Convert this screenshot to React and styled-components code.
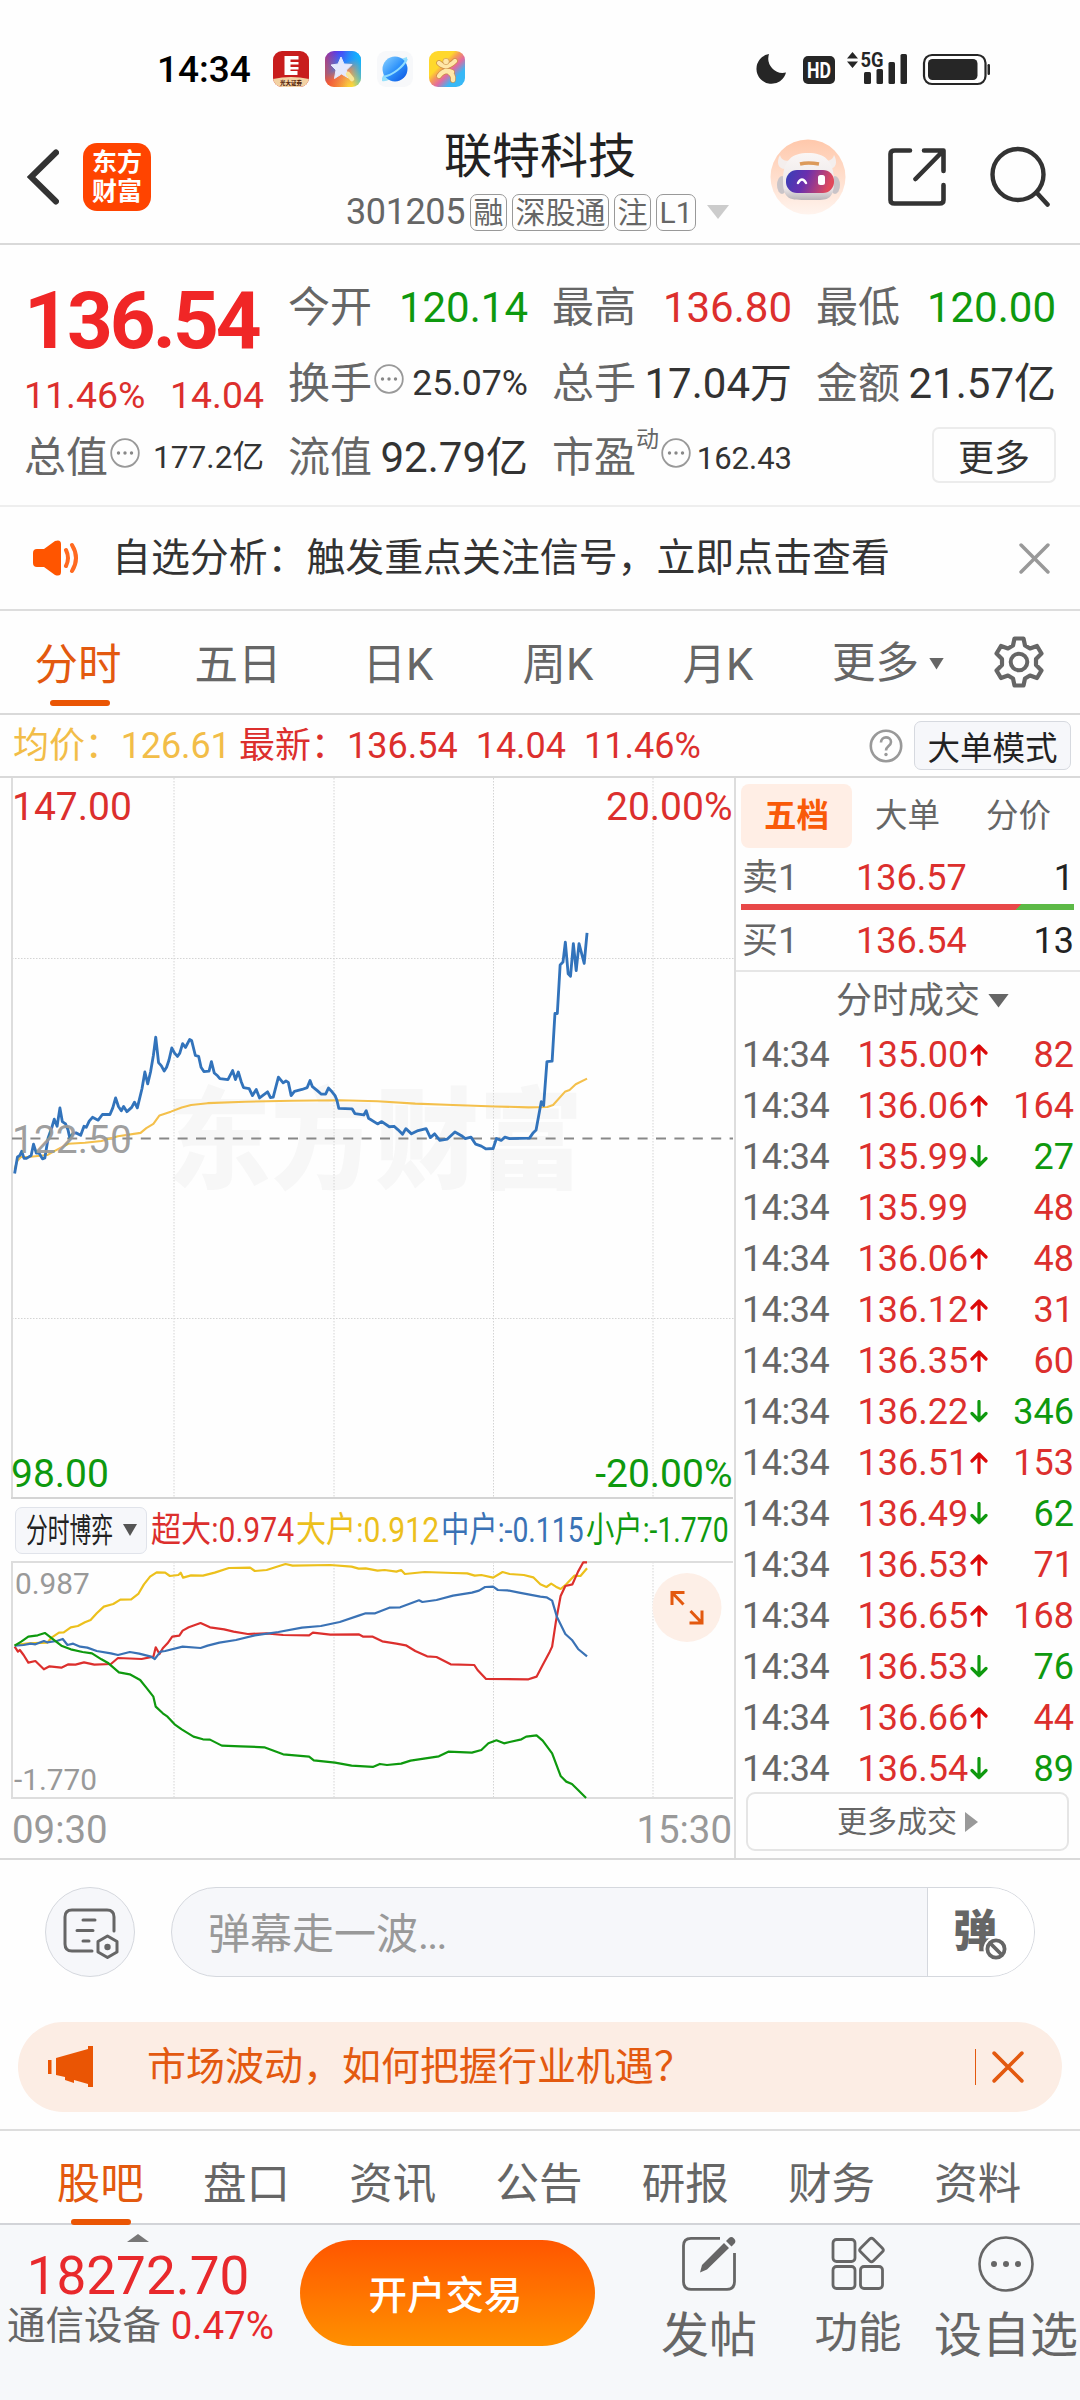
import React from "react";
import styled, { createGlobalStyle } from "styled-components";

const RED = "#dc2f2d";
const GREEN = "#0e990e";
const GREY = "#666";
const ORANGE = "#e3590f";

const quotes = [
  { label: "今开", value: "120.14", color: GREEN },
  { label: "最高", value: "136.80", color: RED },
  { label: "最低", value: "120.00", color: GREEN },
  { label: "换手", value: "25.07%", hint: true, size: 35.7 },
  { label: "总手", value: "17.04万" },
  { label: "金额", value: "21.57亿" },
  { label: "流值", value: "92.79亿" },
  { label: "市盈", value: "162.43", sup: "动", hint: true, size: 31 },
];

const periods = ["分时", "五日", "日K", "周K", "月K"];
const sections = ["股吧", "盘口", "资讯", "公告", "研报", "财务", "资料"];

const ticks = [
  ["135.00", "up", 82],
  ["136.06", "up", 164],
  ["135.99", "down", 27],
  ["135.99", "", 48],
  ["136.06", "up", 48],
  ["136.12", "up", 31],
  ["136.35", "up", 60],
  ["136.22", "down", 346],
  ["136.51", "up", 153],
  ["136.49", "down", 62],
  ["136.53", "up", 71],
  ["136.65", "up", 168],
  ["136.53", "down", 76],
  ["136.66", "up", 44],
  ["136.54", "down", 89],
];

const legend = [
  { text: "超大:0.974", color: RED, squeeze: 0.86 },
  { text: "大户:0.912", color: "#ecc01c", squeeze: 0.86 },
  { text: "中户:-0.115", color: "#3a72b5", squeeze: 0.81 },
  { text: "小户:-1.770", color: GREEN, squeeze: 0.81 },
];

const priceLine =
  "31,855 37,820 42,817 46,808 51,823 56,823 66,817 71,793 77,812 83,812 90,824 95,822 102,780 110,757 115,740 121,755 127,716 132,745 139,750 144,762 148,780 155,770 161,769 171,774 178,755 183,757 189,744 196,736 208,742 217,730 233,730 239,716 245,695 251,713 257,722 262,713 269,724 279,715 285,704 291,716 301,675 307,640 313,665 319,640 325,605 330,566 336,620 342,627 348,638 353,630 358,615 364,589 370,600 376,607 381,600 387,580 393,588 402,571 406,573 414,605 421,607 426,630 432,639 443,638 448,618 454,642 461,648 466,654 483,656 493,637 499,656 505,640 511,660 516,673 528,675 535,690 543,677 550,695 567,682 573,694 579,693 585,670 590,651 600,663 606,659 611,662 617,690 624,681 640,677 651,673 657,658 662,671 673,680 681,687 690,687 696,674 702,680 710,690 714,700 718,717 746,718 752,728 771,731 776,722 781,738 800,750 809,745 825,756 835,755 843,762 853,772 860,760 872,771 886,764 903,760 912,779 921,771 932,785 948,782 964,767 978,775 986,781 998,778 1008,793 1020,797 1030,803 1045,802 1052,781 1062,785 1070,778 1080,781 1122,780 1129,770 1136,763 1142,730 1147,703 1152,711 1159,618 1170,617 1176,516 1181,516 1187,413 1193,407 1198,365 1204,432 1209,437 1215,368 1221,425 1227,368 1238,410 1244,345";
const averageLine =
  "31,845 37,828 44,820 60,820 100,816 120,805 145,792 180,790 215,786 250,776 298,769 310,759 325,750 338,732 362,724 385,715 405,710 440,706 520,703 620,701 720,700 800,702 880,707 960,710 1050,713 1120,715 1160,714 1172,710 1197,682 1207,678 1220,666 1244,654";

const flows = [
  {
    color: "#ecc01c",
    points:
      "31,465 60,460 100,458 110,442 125,428 135,427 150,412 165,408 180,397 192,390 205,370 220,350 240,342 255,329 278,328 293,312 305,283 318,260 332,247 350,248 360,258 378,255 383,248 388,263 405,256 430,257 455,248 485,234 530,233 540,243 565,240 605,222 620,227 700,225 745,230 760,236 775,235 800,242 815,240 840,245 850,240 858,252 900,246 960,249 990,250 1006,257 1020,255 1045,263 1065,246 1080,252 1110,255 1130,262 1145,283 1158,291 1168,281 1178,290 1188,297 1200,283 1217,257 1230,258 1244,235",
  },
  {
    color: RED,
    points:
      "31,470 38,485 42,480 50,495 60,518 75,513 93,538 105,529 130,533 145,523 160,524 178,517 200,524 235,522 250,504 300,507 325,500 330,472 338,492 345,475 355,460 365,440 380,437 387,422 400,412 425,399 445,412 475,418 495,425 525,432 565,430 600,435 655,436 663,428 700,434 760,433 770,440 790,440 810,454 840,461 860,466 880,483 905,499 925,501 955,523 1005,525 1012,540 1030,567 1120,568 1137,560 1150,525 1165,485 1170,470 1178,395 1188,318 1198,288 1213,283 1225,245 1236,217 1244,217",
  },
  {
    color: "#3a72b5",
    points:
      "31,467 50,465 65,461 75,463 93,453 100,457 120,453 133,447 143,465 155,461 170,470 185,473 205,483 235,490 250,495 275,486 295,491 320,500 328,507 340,485 350,483 387,470 425,474 440,467 465,458 500,450 540,436 590,426 640,413 680,408 720,396 760,377 775,370 795,370 825,353 848,352 888,331 895,336 925,330 960,317 1000,308 1015,302 1028,291 1045,290 1055,300 1075,301 1100,308 1145,320 1158,322 1170,332 1180,380 1198,432 1212,450 1225,477 1244,499",
  },
  {
    color: GREEN,
    points:
      "31,467 45,455 60,440 80,436 95,429 110,445 130,467 150,478 175,486 195,490 215,508 230,520 252,547 275,553 297,570 310,593 325,620 330,650 345,670 355,680 370,703 385,718 410,740 430,748 445,749 470,767 510,769 560,772 600,793 655,800 665,811 710,818 745,827 790,831 805,822 820,825 850,821 870,812 930,799 950,785 1000,788 1020,780 1035,760 1052,751 1068,760 1080,756 1105,748 1115,740 1137,736 1150,752 1170,790 1188,858 1200,875 1212,882 1225,900 1242,924",
  },
];

const gridX = [174, 334, 493.5, 653];

const Hint = () => (
  <HintIcon viewBox="0 0 30 30">
    <circle cx="15" cy="15" r="13.8" fill="none" stroke="#999" strokeWidth="1.8" />
    <g fill="#888">
      <circle cx="8.5" cy="15" r="1.7" />
      <circle cx="15" cy="15" r="1.7" />
      <circle cx="21.5" cy="15" r="1.7" />
    </g>
  </HintIcon>
);

const Close = ({ color, size }) => (
  <Icon w={size} h={size} viewBox="0 0 30 30">
    <path d="M2 2 28 28M28 2 2 28" stroke={color} strokeWidth="3.400" fill="none" strokeLinecap="round" />
  </Icon>
);

const TickArrow = ({ dir }) => (
  <Icon w={18} h={24} viewBox="0 0 18 24">
    {dir && (
      <path
        d={dir === "up" ? "M9 21.500V3M2 10 9 3l7 7" : "M9 1.500v19M2 13.500l7 7 7-7"}
        stroke={dir === "up" ? "#dc0a0a" : GREEN}
        strokeWidth="3.200"
        fill="none"
        strokeLinecap="round"
        strokeLinejoin="round"
      />
    )}
  </Icon>
);

const StatusIcons = () => (
  <Icon w={236} h={50} viewBox="755 44 236 50">
    <g fill="#262626">
      <path d="M769 54a15 15 0 1 0 17 18.500A14.500 14.500 0 0 1 769 54Z" />
      <rect x="803" y="56" width="32" height="28" rx="5" />
      <path d="M847 58.500 852.500 52l5.500 6.500ZM847 61.500h11L852.500 68Z" />
      <rect x="864" y="72" width="7" height="12" rx="1.500" />
      <rect x="876.500" y="69" width="6.500" height="15" rx="1.500" />
      <rect x="888.500" y="62" width="6.500" height="22" rx="1.500" />
      <rect x="900.500" y="54" width="6.500" height="30" rx="1.500" />
      <rect x="928" y="59" width="49.500" height="21" rx="4.500" />
      <rect x="987.500" y="64" width="2.500" height="11" rx="1.200" />
    </g>
    <rect x="924" y="55" width="61.500" height="29" rx="8" fill="none" stroke="#262626" strokeWidth="2.200" />
    <StatusText x="807" y="78" fontSize="22" fill="#fff" textLength="24">HD</StatusText>
    <StatusText x="860.500" y="67" fontSize="20.500" fill="#262626" textLength="23">5G</StatusText>
  </Icon>
);

const AppBadges = () => (
  <Icon w={192} h={36} viewBox="0 0 192 36">
    <defs>
      <linearGradient id="star" x1="0.100" y1="0" x2="0.700" y2="1">
        <stop offset="0" stopColor="#5a28f0" />
        <stop offset="0.450" stopColor="#2a86fa" />
        <stop offset="0.650" stopColor="#f08a50" />
        <stop offset="1" stopColor="#fbd93a" />
      </linearGradient>
      <linearGradient id="starBlue" x1="0" y1="0.600" x2="1" y2="0.300">
        <stop offset="0" stopColor="#f4452c" stopOpacity="0.700" />
        <stop offset="0.500" stopColor="#f4452c" stopOpacity="0" />
        <stop offset="0.600" stopColor="#10b4ff" stopOpacity="0" />
        <stop offset="1" stopColor="#10b4ff" />
      </linearGradient>
      <linearGradient id="planet" x1="0" y1="0" x2="1" y2="1">
        <stop offset="0" stopColor="#8ed4ff" />
        <stop offset="0.500" stopColor="#2f93fb" />
        <stop offset="1" stopColor="#0850e0" />
      </linearGradient>
      <linearGradient id="dancer" x1="0" y1="0" x2="1" y2="1">
        <stop offset="0.350" stopColor="#ffd82c" />
        <stop offset="0.450" stopColor="#f59a58" />
        <stop offset="0.580" stopColor="#e26aa0" />
        <stop offset="0.750" stopColor="#38b8f6" />
      </linearGradient>
      <clipPath id="redClip">
        <rect width="36" height="36" rx="9" />
      </clipPath>
    </defs>
    <g clipPath="url(#redClip)">
      <rect width="36" height="36" fill="#c81d1d" />
      <path d="M0 28q18-4 36 0v8H0Z" fill="#f3d2a4" />
      <path d="M11.500 5h14v3.500h-8v2.500h8v2.500h-8v2.500h8v2.500h-8V20h7v4h-13Z" fill="#fff" />
      <MiniText x="18" y="34" textAnchor="middle" fontSize="5.500">光大证券</MiniText>
    </g>
    <g transform="translate(52 0)">
      <rect width="36" height="36" rx="9" fill="url(#star)" />
      <rect width="36" height="36" rx="9" fill="url(#starBlue)" />
      <path d="m16 6 3 7 8 .5-5.500 5.500 2 8-7-4-7 4.500 1.500-8.500-5-5 7-1Z" fill="#e4e8fc" strokeLinejoin="round" stroke="#e4e8fc" />
      <path d="m23 23 4 5" stroke="#f8e69a" strokeWidth="4.500" strokeLinecap="round" />
    </g>
    <g transform="translate(104 0)">
      <rect width="36" height="36" rx="9" fill="#f7f8fa" />
      <path d="M5 27C10 17 20 9 30 6c1 5-3 10-9 16S9 31 5 30Z" fill="#96e0fa" />
      <circle cx="18" cy="18" r="12.500" fill="url(#planet)" />
      <path d="M6 26C16 24 26 16 30 8" stroke="#8fdcff" strokeWidth="2" fill="none" />
    </g>
    <g transform="translate(156 0)">
      <rect width="36" height="36" rx="9" fill="url(#dancer)" />
      <g fill="none" stroke="#c88b45" strokeWidth="5.600" strokeLinecap="round">
        <path d="M10 12q7 7 16-2M10 25q5-7 13-4M20 21q5 3 4 8" />
      </g>
      <g fill="none" stroke="#ffe7a8" strokeWidth="4.400" strokeLinecap="round">
        <path d="M10 12q7 7 16-2M10 25q5-7 13-4M20 21q5 3 4 8" />
      </g>
      <circle cx="17" cy="10.500" r="3.200" fill="#ffe7a8" stroke="#c88b45" strokeWidth="0.600" />
    </g>
  </Icon>
);

const Robot = () => (
  <Icon w={76} h={76} viewBox="0 0 76 76">
    <defs>
      <linearGradient id="halo" x1="0" y1="0" x2="0" y2="1">
        <stop offset="0" stopColor="#ffc8ab" />
        <stop offset="1" stopColor="#fff4ee" />
      </linearGradient>
      <linearGradient id="visor" x1="0" y1="0" x2="1" y2="0.200">
        <stop offset="0" stopColor="#3440b8" />
        <stop offset="0.450" stopColor="#6a2fae" />
        <stop offset="1" stopColor="#e04a5c" />
      </linearGradient>
      <linearGradient id="shell" x1="0" y1="0" x2="0" y2="1">
        <stop offset="0" stopColor="#faf6f5" />
        <stop offset="0.750" stopColor="#ece7e8" />
        <stop offset="1" stopColor="#b9b4b8" />
      </linearGradient>
    </defs>
    <circle cx="38" cy="38" r="37.500" fill="url(#halo)" />
    <path d="M10 16c-4 7-2 14 5 14l8-9c-7 2-12 0-13-5ZM64 16c4 7 2 14-5 14l-8-9c7 2 12 0 13-5Z" fill="#f4eeed" />
    <ellipse cx="12" cy="46" rx="5" ry="9" fill="#c9c4c8" />
    <ellipse cx="65" cy="46" rx="5" ry="9" fill="#c9c4c8" />
    <path d="M13 42C13 21 22 14 38 14s26 7 26 28-8 19-26 19-25 0-25-19Z" fill="url(#shell)" />
    <path d="M30 25q8-2 19 0" stroke="#dc9a5a" strokeWidth="3.500" fill="none" />
    <rect x="16" y="31" width="48" height="23" rx="11" fill="url(#visor)" />
    <path d="M28 44q4-7 8 0" stroke="#fff" strokeWidth="2.500" fill="none" strokeLinecap="round" />
    <rect x="48" y="36" width="7" height="10" rx="2.500" fill="#fff" />
  </Icon>
);

const ShareIcon = () => (
  <Icon w={58} h={58} viewBox="0 0 58 58">
    <path
      d="M22 2.500H7Q2.500 2.500 2.500 6v46q0 3.500 4 3.500h45q4 0 4-3.500V37M36 2.500h19.500V23M55 3 27.500 31"
      fill="none"
      stroke="#333"
      strokeWidth="4.600"
      strokeLinecap="round"
      strokeLinejoin="round"
    />
  </Icon>
);

const SearchIcon = () => (
  <Icon w={62} h={62} viewBox="0 0 62 62">
    <circle cx="30" cy="28.500" r="25.500" fill="none" stroke="#333" strokeWidth="4.400" />
    <path d="m48.500 46.500 11 12" stroke="#333" strokeWidth="4.600" strokeLinecap="round" />
  </Icon>
);

const GearIcon = () => (
  <Icon w={52} h={52} viewBox="0 0 52 52">
    <path
      d="M21.500 2.500h9l1.500 7 5 3 7-2.500 4.500 7.500-5.500 5.500v6l5.500 5.500-4.500 7.500-7-2.500-5 3-1.500 7h-9l-1.500-7-5-3-7 2.500-4.500-7.500L9 29v-6l-5.500-5.500L8 10l7 2.500 5-3Z"
      fill="none"
      stroke={GREY}
      strokeWidth="4.200"
      strokeLinejoin="round"
    />
    <circle cx="26" cy="26" r="8.300" fill="none" stroke={GREY} strokeWidth="4" />
  </Icon>
);

const PriceChart = () => (
  <Icon w={734} h={721} viewBox="0 778 734 721">
    <Watermark x="167" y="1180" textLength="416">东方财富</Watermark>
    <g stroke="#d4d4d4" strokeWidth="1" strokeDasharray="1.500 1.500">
      {gridX.map((x) => (
        <path key={x} d={`M${x} 778V1497`} />
      ))}
      <path d="M12 958.500H734M12 1318.500H734" />
    </g>
    <path d="M12 778V1498" stroke="#ddd" strokeWidth="2" />
    <path d="M11 1498H733" stroke="#d4d4d4" strokeWidth="2" />
    <path d="M12 1138.500H733" stroke="#888" strokeWidth="1.800" strokeDasharray="10 8.400" />
    <AxisText x="12" y="819.500" fill={RED}>147.00</AxisText>
    <AxisText x="732.500" y="819.500" fill={RED} textAnchor="end">20.00%</AxisText>
    <AxisText x="11" y="1487" fill={GREEN}>98.00</AxisText>
    <AxisText x="732.500" y="1487" fill={GREEN} textAnchor="end">-20.00%</AxisText>
    <g transform="translate(0 770) scale(0.4719)" fill="none" strokeLinejoin="round">
      <polyline points={averageLine} stroke="#f4c04c" strokeWidth="4.400" />
      <polyline points={priceLine} stroke="#3273bb" strokeWidth="6" />
    </g>
    <AxisText x="12" y="1153" fill="#999" fillOpacity="0.950">122.50</AxisText>
  </Icon>
);

const FlowChart = () => (
  <Icon w={734} h={239} viewBox="0 1561 734 239">
    <g stroke="#d4d4d4" strokeWidth="1" strokeDasharray="1.500 1.500">
      {gridX.map((x) => (
        <path key={x} d={`M${x} 1562V1797`} />
      ))}
    </g>
    <path d="M12 1561V1799M12 1562H733M12 1798H733" stroke="#ddd" strokeWidth="2" fill="none" />
    <AxisText x="15" y="1593.500" fill="#999" small>0.987</AxisText>
    <AxisText x="14" y="1790" fill="#999" small>-1.770</AxisText>
    <g transform="translate(0 1490) scale(0.4719 0.3333)" fill="none" strokeLinejoin="round">
      {flows.map((f) => (
        <polyline key={f.color} points={f.points} stroke={f.color} strokeWidth="2.200" vectorEffect="non-scaling-stroke" />
      ))}
    </g>
    <circle cx="687" cy="1607.500" r="34.500" fill="#fdefe7" />
    <path
      d="M684.500 1592.500h-12.500v12.500M672 1592.500l11.500 12M689.500 1623h12.500v-12.500M702 1623l-11.500-12"
      fill="none"
      stroke={ORANGE}
      strokeWidth="3"
    />
  </Icon>
);

const App = () => (
  <Screen>
    <GlobalStyle />
    <StatusBar>
      <Clock>14:34</Clock>
      <AppBadges />
      <Spacer />
      <StatusIcons />
    </StatusBar>

    <Header>
      <HeaderSide gap={24} pl={27}>
        <Icon w={32} h={56} viewBox="0 0 32 56">
          <path d="M29 3.500 4 28l25 24.500" fill="none" stroke="#333" strokeWidth="6" strokeLinecap="round" />
        </Icon>
        <Logo>
          <span>东方</span>
          <span>财富</span>
        </Logo>
      </HeaderSide>
      <Heading>
        <StockName>联特科技</StockName>
        <CodeRow>
          <Code>301205</Code>
          <Tag>融</Tag>
          <Tag>深股通</Tag>
          <Tag>注</Tag>
          <Tag>L1</Tag>
          <Triangle w={22} h={14} color="#ccc" ml={6} />
        </CodeRow>
      </Heading>
      <HeaderSide gap={42}>
        <Robot />
        <ShareIcon />
        <SearchIcon />
      </HeaderSide>
    </Header>

    <Quote>
      <QuoteMain>
        <Price>136.54</Price>
        <Change>
          <span>11.46%</span>
          <span>14.04</span>
        </Change>
        <QuoteCell>
          <QuoteLabel>总值</QuoteLabel>
          <Hint />
          <QuoteValue size={31.6}>177.2亿</QuoteValue>
        </QuoteCell>
      </QuoteMain>
      <QuoteGrid>
        {quotes.map((q) => (
          <QuoteCell key={q.label}>
            <QuoteLabel>{q.label}</QuoteLabel>
            {q.sup && <Sup>{q.sup}</Sup>}
            {q.hint && <Hint />}
            <QuoteValue size={q.size} color={q.color}>{q.value}</QuoteValue>
          </QuoteCell>
        ))}
        <MoreButton>更多</MoreButton>
      </QuoteGrid>
    </Quote>

    <Notice>
      <Icon w={46} h={36} viewBox="0 0 46 36">
        <path d="M0 13q0-4 4-4h7L22 1q6-2 6 3v28q0 5-6 3l-11-8H4q-4 0-4-4Z" fill="#ff5500" />
        <path d="M33 10q4 8 0 16M39 5q8 13 0 26" stroke="#ff6a20" strokeWidth="4" fill="none" strokeLinecap="round" />
      </Icon>
      <NoticeText>自选分析：触发重点关注信号，立即点击查看</NoticeText>
      <Close color="#999" size={31} />
    </Notice>

    <PeriodTabs>
      {periods.map((p, i) => (
        <Period key={p} active={i === 0 ? 1 : 0}>{p}</Period>
      ))}
      <PeriodMore>
        更多
        <Triangle w={15} h={12} color={GREY} ml={10} />
      </PeriodMore>
      <GearIcon />
    </PeriodTabs>

    <InfoBar>
      <Average>均价：126.61</Average>
      <Latest>
        <span>最新：136.54</span>
        <span>14.04</span>
        <span>11.46%</span>
      </Latest>
      <Spacer />
      <Icon w={34} h={34} viewBox="0 0 34 34">
        <circle cx="17" cy="17" r="15.200" fill="none" stroke="#999" strokeWidth="2.600" />
        <path d="M12 13.500c0-7 10-6.500 10-.5 0 4-5 4-5 8.500" fill="none" stroke="#999" strokeWidth="2.600" />
        <circle cx="17" cy="25.500" r="1.700" fill="#999" />
      </Icon>
      <ModeButton>大单模式</ModeButton>
    </InfoBar>

    <Body>
      <Charts>
        <PriceChart />
        <LegendRow>
          <IndicatorButton>
            <IndicatorName>分时博弈</IndicatorName>
            <Triangle w={14} h={12} color="#555" />
          </IndicatorButton>
          {legend.map((l) => (
            <LegendItem key={l.text} color={l.color}>
              <Squeezed ratio={l.squeeze}>{l.text}</Squeezed>
            </LegendItem>
          ))}
        </LegendRow>
        <FlowChart />
        <TimeAxis>
          <span>09:30</span>
          <span>15:30</span>
        </TimeAxis>
      </Charts>

      <Depth>
        <DepthTabs>
          <DepthTab active={1}>五档</DepthTab>
          <DepthTab>大单</DepthTab>
          <DepthTab>分价</DepthTab>
        </DepthTabs>
        <OrderRow pt={8}>
          <Dim>卖1</Dim>
          <Deal>136.57</Deal>
          <Volume>1</Volume>
        </OrderRow>
        <Ratio />
        <OrderRow pt={1}>
          <Dim>买1</Dim>
          <Deal>136.54</Deal>
          <Volume>13</Volume>
        </OrderRow>
        <TicksTitle>
          分时成交
          <Triangle w={21} h={14} color={GREY} ml={8} />
        </TicksTitle>
        {ticks.map(([price, dir, volume], i) => (
          <TickRow key={i}>
            <Dim>14:34</Dim>
            <Deal>
              {price}
              <TickArrow dir={dir} />
            </Deal>
            <Volume color={dir === "down" ? GREEN : RED}>{volume}</Volume>
          </TickRow>
        ))}
        <MoreTicks>
          更多成交
          <Icon w={13} h={20} viewBox="0 0 13 20">
            <path d="M0 0 13 10 0 20Z" fill="#999" />
          </Icon>
        </MoreTicks>
      </Depth>
    </Body>

    <Danmaku>
      <RoundButton>
        <Icon w={56} h={52} viewBox="0 0 56 52">
          <g fill="none" stroke={GREY} strokeWidth="3" strokeLinecap="round">
            <path d="M29 43H9q-7 0-7-7V9q0-7 7-7h35q7 0 7 7v14" />
            <path d="M20 12h12M14 22.500h16M20 33h6" />
            <path d="m44.500 28 9.500 5.500v10.500l-9.500 5.500-9.500-5.500V33.500Z" strokeLinejoin="round" />
          </g>
          <circle cx="44.500" cy="39" r="3.200" fill={GREY} />
        </Icon>
      </RoundButton>
      <InputBox>
        <Placeholder>弹幕走一波<Dots>...</Dots></Placeholder>
        <DanmakuToggle>
          弹
          <Ban viewBox="0 0 26 26">
            <circle cx="13" cy="13" r="12.500" fill="#fff" />
            <circle cx="13" cy="13" r="8.600" fill="none" stroke={GREY} strokeWidth="3.800" />
            <path d="m8 8 10 10" stroke={GREY} strokeWidth="3.800" />
          </Ban>
        </DanmakuToggle>
      </InputBox>
    </Danmaku>

    <Banner>
      <Icon w={48} h={42} viewBox="0 0 48 42">
        <path d="M0 14h3.500v14H0ZM8 12 40 3V0h5v41h-5v-3l-14-4v3l-9-3v-3l-9-2Z" fill="#ea5504" />
      </Icon>
      <BannerText>市场波动，如何把握行业机遇？</BannerText>
      <BannerRule />
      <Close color={ORANGE} size={32} />
    </Banner>

    <SectionTabs>
      {sections.map((s, i) => (
        <SectionTab key={s} active={i === 0 ? 1 : 0}>{s}</SectionTab>
      ))}
    </SectionTabs>

    <Footer>
      <Sector>
        <Triangle w={22} h={8} color="#777" up={1} />
        <SectorIndex>18272.70</SectorIndex>
        <SectorName>
          通信设备 <em>0.47%</em>
        </SectorName>
      </Sector>
      <TradeButton>开户交易</TradeButton>
      <Action w={160} size={48}>
        <Icon w={56} h={56} viewBox="0 0 56 56">
          <path d="M39 2.300H10q-7.500 0-7.500 7.500v36q0 7.500 7.500 7.500h36q7.500 0 7.500-7.500V17" fill="none" stroke={GREY} strokeWidth="2.800" />
          <path d="M19 36.500 21 29 43 7l5 5-22 21.500ZM45 5l3-3q2.500-2 5 .5t.5 5l-3 3Z" fill={GREY} />
        </Icon>
        发帖
      </Action>
      <Action w={138} size={43.5} lh={84}>
        <Icon w={56} h={56} viewBox="0 0 56 56">
          <g fill="none" stroke={GREY} strokeWidth="2.800">
            <rect x="3" y="3.500" width="22" height="22" rx="3.500" />
            <rect x="3" y="30.500" width="22" height="22" rx="3.500" />
            <rect x="30.500" y="30.500" width="22" height="22" rx="3.500" />
            <rect x="32.500" y="5" width="18" height="18" rx="2.500" transform="rotate(45 41.500 14)" />
          </g>
        </Icon>
        功能
      </Action>
      <Action w={158} size={48}>
        <Icon w={56} h={56} viewBox="0 0 56 56">
          <circle cx="28" cy="28" r="26.500" fill="none" stroke={GREY} strokeWidth="2.600" />
          <g fill={GREY}>
            <circle cx="16" cy="28" r="3" />
            <circle cx="28" cy="28" r="3" />
            <circle cx="40" cy="28" r="3" />
          </g>
        </Icon>
        设自选
      </Action>
    </Footer>
  </Screen>
);

export default App;

const GlobalStyle = createGlobalStyle`
  * {
    box-sizing: border-box;
  }
  body {
    margin: 0;
    background: #fefefe;
  }
`;
const Screen = styled.div`
  width: 1080px;
  height: 2400px;
  overflow: hidden;
  display: flex;
  flex-direction: column;
  background: #fefefe;
  color: #333;
  font-family: Roboto, "Noto Sans CJK SC", sans-serif;
  line-height: 1;
  white-space: nowrap;
`;
const Icon = styled.svg.withConfig({ shouldForwardProp: (p) => !["w", "h"].includes(p) })`
  display: block;
  flex: none;
  width: ${({ w }) => w}px;
  height: ${({ h }) => h}px;
`;
const HintIcon = styled.svg`
  flex: none;
  width: 30px;
  height: 30px;
  margin: 0 0 10px 2px;
`;
const StatusText = styled.text.attrs({ lengthAdjust: "spacingAndGlyphs" })`
  font-family: Roboto, sans-serif;
  font-weight: 700;
`;
const MiniText = styled.text`
  font-family: "Noto Sans CJK SC", sans-serif;
  font-weight: 900;
  fill: #5a2a10;
`;
const AxisText = styled.text.withConfig({ shouldForwardProp: (p) => p !== "small" })`
  font-family: Roboto, sans-serif;
  font-size: ${({ small }) => (small ? 29.8 : 39)}px;
`;
const Watermark = styled.text.attrs({ lengthAdjust: "spacingAndGlyphs" })`
  font-family: "Noto Sans CJK SC", sans-serif;
  font-weight: 900;
  font-size: 110px;
  fill: #f7f7f7;
`;
const Spacer = styled.div`
  flex: 1;
`;
const Triangle = styled.i`
  flex: none;
  width: ${({ w }) => w}px;
  height: ${({ h }) => h}px;
  margin-left: ${({ ml }) => ml || 0}px;
  background: ${({ color }) => color};
  clip-path: ${({ up }) => (up ? "polygon(50% 0, 100% 100%, 0 100%)" : "polygon(0 0, 100% 0, 50% 100%)")};
`;

const StatusBar = styled.div`
  flex: none;
  height: 110px;
  padding: 28px 89px 0 157px;
  display: flex;
  align-items: center;
`;
const Clock = styled.span`
  width: 116px;
  font-size: 37px;
  font-weight: 500;
  color: #000;
`;

const Header = styled.header`
  flex: none;
  height: 135px;
  display: grid;
  grid-template-columns: 310px 460px 310px;
  border-bottom: 2px solid #d9d9d9;
`;
const HeaderSide = styled.div`
  display: flex;
  align-items: center;
  gap: ${({ gap }) => gap}px;
  padding-left: ${({ pl }) => pl || 0}px;
  padding-top: 1px;
`;
const Logo = styled.div`
  width: 68px;
  height: 68px;
  border-radius: 14px;
  background: #ff4400;
  color: #fff;
  display: flex;
  flex-direction: column;
  align-items: center;
  justify-content: center;
  gap: 4px;
  font-size: 25px;
  font-weight: 700;
`;
const Heading = styled.div`
  padding-top: 22px;
  display: flex;
  flex-direction: column;
  align-items: center;
`;
const StockName = styled.div`
  height: 61px;
  font-size: 48px;
  line-height: 50px;
  color: #222;
`;
const CodeRow = styled.div`
  display: flex;
  align-items: center;
  gap: 5px;
  height: 38px;
  padding-right: 5px;
`;
const Code = styled.span`
  font-size: 36px;
  letter-spacing: -0.4px;
  color: ${GREY};
`;
const Tag = styled.span`
  height: 37px;
  padding: 0 2.5px;
  border: 1.5px solid #999;
  border-radius: 7px;
  font-size: 30px;
  line-height: 36px;
  color: ${GREY};
`;

const Quote = styled.section`
  flex: none;
  height: 262px;
  padding: 25px 24px 0;
  display: flex;
  gap: 24px;
  border-bottom: 2px solid #eee;
`;
const QuoteMain = styled.div`
  width: 240px;
  display: grid;
  grid-template-rows: 102px 50px 72px;
`;
const Price = styled.div`
  font-size: 80px;
  font-weight: 700;
  line-height: 103px;
  letter-spacing: -3px;
  color: #f02626;
`;
const Change = styled.div`
  display: flex;
  justify-content: space-between;
  font-size: 37.4px;
  line-height: 47px;
  color: ${RED};
`;
const QuoteGrid = styled.div`
  display: grid;
  grid-template-columns: repeat(3, 240px);
  grid-template-rows: 76px 76px 72px;
  column-gap: 24px;
`;
const QuoteCell = styled.div`
  display: flex;
  align-items: center;
`;
const QuoteLabel = styled.span`
  font-size: 42px;
  color: ${GREY};
`;
const QuoteValue = styled.span`
  margin-left: auto;
  font-size: ${({ size }) => size || 42}px;
  color: ${({ color }) => color || "#333"};
`;
const Sup = styled.sup`
  align-self: flex-start;
  margin-top: 6px;
  font-size: 23px;
  line-height: 23px;
  color: ${GREY};
`;
const MoreButton = styled.button`
  justify-self: end;
  width: 124px;
  height: 56px;
  margin-top: 5px;
  padding: 0 0 2px;
  border: 2px solid #ececec;
  border-radius: 7px;
  background: none;
  font: 36px Roboto, "Noto Sans CJK SC", sans-serif;
  color: #333;
`;

const Notice = styled.div`
  flex: none;
  height: 104px;
  padding: 0 30px 0 33px;
  display: flex;
  align-items: center;
  border-bottom: 2px solid #ddd;
`;
const NoticeText = styled.span`
  flex: 1;
  margin-left: 33px;
  font-size: 38.9px;
`;

const PeriodTabs = styled.nav`
  flex: none;
  height: 104px;
  display: flex;
  align-items: center;
  border-bottom: 2px solid #d9d9d9;
`;
const Period = styled.div`
  width: 160px;
  height: 102px;
  display: flex;
  flex-direction: column;
  align-items: center;
  font-size: 43.5px;
  line-height: 109px;
  text-indent: -4px;
  color: ${({ active }) => (active ? ORANGE : GREY)};
  &::after {
    content: "";
    flex: none;
    width: 60px;
    height: 6px;
    margin-top: -20px;
    border-radius: 3px;
    background: ${({ active }) => (active ? "#ea5504" : "none")};
  }
`;
const PeriodMore = styled.div`
  width: 193px;
  padding-left: 32px;
  padding-top: 3px;
  display: flex;
  align-items: center;
  font-size: 43.5px;
  color: ${GREY};
`;

const InfoBar = styled.div`
  flex: none;
  height: 63px;
  padding: 4px 9px 4px 13px;
  display: flex;
  align-items: center;
  border-bottom: 2px solid #d9d9d9;
  font-size: 36px;
`;
const Average = styled.span`
  width: 226px;
  letter-spacing: -0.1px;
  color: #f2bd48;
`;
const Latest = styled.span`
  display: flex;
  gap: 18px;
  color: ${RED};
`;
const ModeButton = styled.button`
  width: 157px;
  height: 49px;
  margin-left: 11px;
  padding: 0;
  border: 1.5px solid #d6d9df;
  border-radius: 7px;
  background: #f6f7fa;
  font: 32.5px Roboto, "Noto Sans CJK SC", sans-serif;
  color: #222;
`;

const Body = styled.main`
  flex: none;
  height: 1082px;
  display: flex;
  border-bottom: 2px solid #d9d9d9;
`;
const Charts = styled.div`
  width: 734px;
`;
const LegendRow = styled.div`
  height: 62px;
  padding-left: 15px;
  display: flex;
  align-items: center;
`;
const IndicatorButton = styled.div`
  width: 132px;
  height: 47px;
  margin-right: 4px;
  padding: 0 9px 0 10px;
  display: flex;
  align-items: center;
  justify-content: space-between;
  border: 1px solid #e0e3ea;
  border-radius: 7px;
  background: #f6f7fa;
`;
const IndicatorName = styled.span`
  width: 86px;
  font-size: 33px;
  color: #222;
  transform: scaleX(0.66);
  transform-origin: left;
`;
const LegendItem = styled.div`
  width: 145px;
  font-size: 35px;
  color: ${({ color }) => color};
`;
const Squeezed = styled.span`
  display: inline-block;
  transform: scaleX(${({ ratio }) => ratio});
  transform-origin: left;
`;
const TimeAxis = styled.div`
  height: 58px;
  padding: 0 2px 0 12px;
  display: flex;
  justify-content: space-between;
  font-size: 38.4px;
  line-height: 60px;
  color: #999;
`;

const Depth = styled.aside`
  width: 346px;
  border-left: 2px solid #ddd;
  display: flex;
  flex-direction: column;
`;
const DepthTabs = styled.div`
  flex: none;
  height: 66px;
  padding: 6px 6px 0 5px;
  display: grid;
  grid-template-columns: repeat(3, 1fr);
`;
const DepthTab = styled.div`
  border-radius: 8px;
  text-align: center;
  font-size: 32.5px;
  line-height: 64px;
  font-weight: ${({ active }) => (active ? 700 : 400)};
  color: ${({ active }) => (active ? "#f95a08" : GREY)};
  background: ${({ active }) => (active ? "#ffeee5" : "none")};
`;
const OrderRow = styled.div`
  flex: none;
  height: 60px;
  padding: ${({ pt }) => pt || 0}px 6px 0 6px;
  display: grid;
  grid-template-columns: 114px 1fr auto;
  align-items: center;
  font-size: 36px;
`;
const Dim = styled.span`
  color: ${GREY};
`;
const Deal = styled.span`
  display: flex;
  align-items: center;
  color: ${RED};
`;
const TickRow = styled(OrderRow)`
  height: 51.05px;
  ${Dim} {
    letter-spacing: -0.5px;
  }
  ${Deal} {
    gap: 2px;
    padding-left: 1.5px;
  }
`;
const Volume = styled.span`
  text-align: right;
  color: ${({ color }) => color || "#222"};
`;
const Ratio = styled.div`
  flex: none;
  height: 6px;
  margin: 0 6px 0 5px;
  background: linear-gradient(135deg, #e84848 0 82.8%, #5cb946 82.8%);
`;
const TicksTitle = styled.div`
  flex: none;
  height: 59px;
  display: flex;
  align-items: center;
  padding-left: 100px;
  border-top: 2px solid #e6e6e6;
  font-size: 36px;
  color: ${GREY};
`;
const MoreTicks = styled.div`
  flex: none;
  height: 59px;
  margin: -3px 11px 0 10px;
  padding-top: 1px;
  display: flex;
  align-items: center;
  justify-content: center;
  gap: 8px;
  border: 2px solid #e5e5e5;
  border-radius: 9px;
  font-size: 30px;
  color: ${GREY};
`;

const Danmaku = styled.div`
  flex: none;
  height: 162px;
  padding: 27px 45px 0;
  display: flex;
  gap: 36px;
`;
const RoundButton = styled.div`
  width: 90px;
  height: 90px;
  padding: 3px 0 0 1px;
  display: flex;
  align-items: center;
  justify-content: center;
  border: 1.5px solid #d5d8de;
  border-radius: 50%;
  background: #f6f7fa;
`;
const InputBox = styled.div`
  flex: 1;
  height: 90px;
  display: flex;
  border: 1.5px solid #d5d8de;
  border-radius: 45px;
  background: #f6f7fa;
  overflow: hidden;
`;
const Placeholder = styled.span`
  flex: 1;
  padding-left: 36px;
  font-size: 42px;
  line-height: 93px;
  color: #999;
`;
const Dots = styled.span`
  letter-spacing: -1.8px;
`;
const DanmakuToggle = styled.div`
  position: relative;
  width: 107px;
  padding-left: 25px;
  border-left: 1.5px solid #d5d8de;
  background: #fff;
  font-size: 44px;
  font-weight: 900;
  line-height: 88px;
  color: ${GREY};
`;
const Ban = styled.svg`
  position: absolute;
  left: 55px;
  top: 48px;
  width: 26px;
  height: 26px;
`;

const Banner = styled.div`
  flex: none;
  height: 90px;
  margin: 0 18px 17px;
  padding: 0 38px 0 30px;
  display: flex;
  align-items: center;
  border-radius: 45px;
  background: #fcede4;
  color: ${ORANGE};
`;
const BannerText = styled.span`
  flex: 1;
  margin-left: 51px;
  font-size: 39px;
  line-height: 42px;
`;
const BannerRule = styled.i`
  width: 1.5px;
  height: 36px;
  margin-right: 16px;
  background: ${ORANGE};
`;

const SectionTabs = styled.nav`
  flex: none;
  height: 96px;
  padding: 0 28px;
  display: flex;
  border-top: 2px solid #ddd;
  border-bottom: 2px solid #d2d4d8;
`;
const SectionTab = styled(Period)`
  flex: 1;
  height: 92px;
  font-size: 43.5px;
  line-height: 108px;
  text-indent: -2px;
  &::after {
    margin-top: -20px;
  }
`;

const Footer = styled.footer`
  flex: 1;
  display: flex;
  background: #f6f8fa;
`;
const Sector = styled.div`
  flex: none;
  width: 300px;
  padding: 9px 24px 0 0;
  display: flex;
  flex-direction: column;
  align-items: center;
`;
const SectorIndex = styled.div`
  height: 57px;
  margin-top: 6px;
  font-size: 53px;
  line-height: 56px;
  color: #e8292c;
`;
const SectorName = styled.div`
  margin-left: 5px;
  font-size: 38.5px;
  line-height: 41px;
  color: ${GREY};
  em {
    font-style: normal;
    color: #e8292c;
  }
`;
const TradeButton = styled.button`
  flex: none;
  width: 295px;
  height: 106px;
  margin: 15px 34px 0 0;
  padding: 0 4px 3px 0;
  border: none;
  border-radius: 53px;
  background: linear-gradient(#ff5600, #ff9000);
  font: 500 38.5px Roboto, "Noto Sans CJK SC", sans-serif;
  color: #fff;
`;
const Action = styled.div`
  flex: none;
  width: ${({ w }) => w}px;
  padding-top: 11px;
  display: flex;
  flex-direction: column;
  align-items: center;
  font-size: ${({ size }) => size}px;
  line-height: ${({ lh }) => lh || 88}px;
  color: ${GREY};
`;
